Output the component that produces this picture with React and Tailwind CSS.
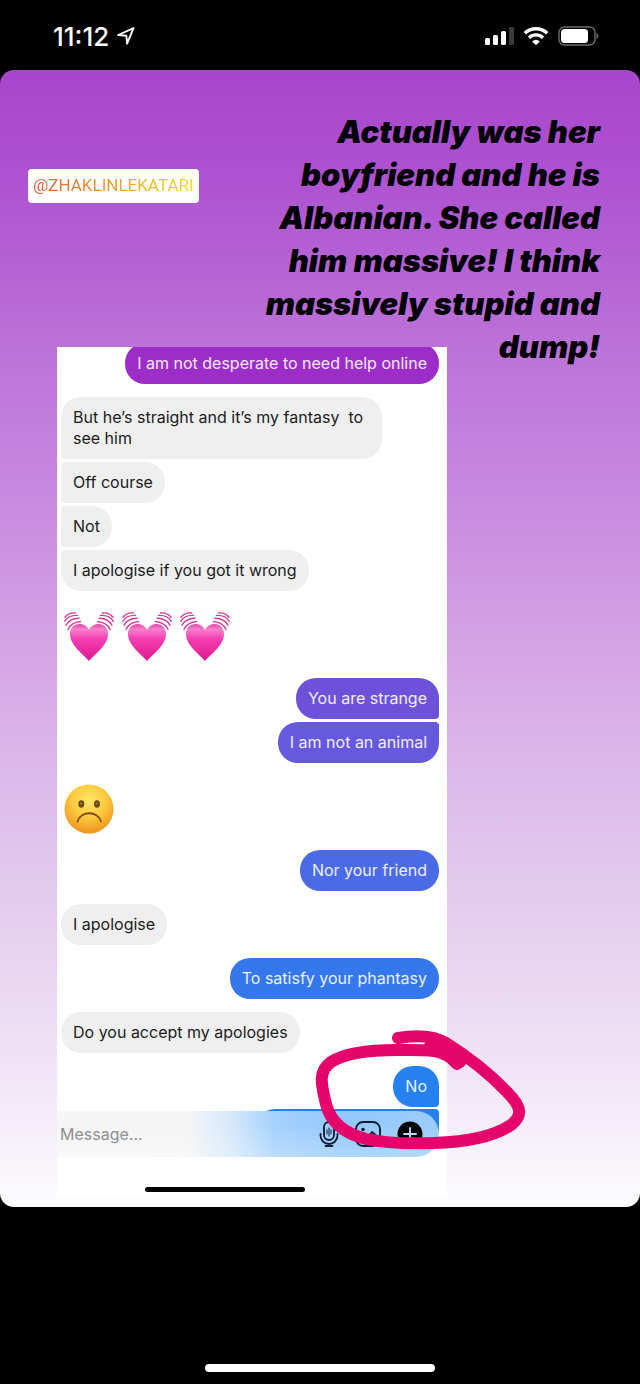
const thread = [
  {
    from: "me",
    items: [{ text: "I am not desperate to need help online", shape: "rounded-[20px]", color: "bg-[#9d2dc9]" }],
  },
  {
    from: "them",
    items: [
      { text: "But he’s straight and it’s my fantasy  to see him", shape: "rounded-[20px] rounded-bl-sm" },
      { text: "Off course", shape: "rounded-[20px] rounded-l-sm" },
      { text: "Not", shape: "rounded-[20px] rounded-l-sm" },
      { text: "I apologise if you got it wrong", shape: "rounded-[20px] rounded-tl-sm" },
    ],
  },
  { from: "them", emoji: "hearts" },
  {
    from: "me",
    items: [
      { text: "You are strange", shape: "rounded-[20px] rounded-br-sm", color: "bg-[#6e51d9]" },
      { text: "I am not an animal", shape: "rounded-[20px] rounded-tr-sm", color: "bg-[#6759de]" },
    ],
  },
  { from: "them", emoji: "sad" },
  {
    from: "me",
    items: [{ text: "Nor your friend", shape: "rounded-[20px]", color: "bg-[#4b6ae5]" }],
  },
  { from: "them", items: [{ text: "I apologise", shape: "rounded-[20px]" }] },
  {
    from: "me",
    items: [{ text: "To satisfy your phantasy", shape: "rounded-[20px]", color: "bg-[#3577ec]" }],
  },
  { from: "them", items: [{ text: "Do you accept my apologies", shape: "rounded-[20px]" }] },
  {
    from: "me",
    items: [{ text: "No", shape: "rounded-[20px] rounded-br-sm", color: "bg-[#2581f0]" }],
  },
];

const StatusBar = () => (
  <header className="flex h-[70px] items-center justify-between pt-0.5 pr-[41px] pl-[53px]">
    <div className="flex items-center gap-2">
      <span className="text-[26px] font-medium">11:12</span>
      <svg className="h-[18px] w-[18px]" viewBox="0 0 18 18" fill="none" stroke="currentColor" strokeWidth="1.9" strokeLinejoin="round">
        <path d="M16.5 1.2 1.2 8l8.200.8.700 7.800z" />
      </svg>
    </div>
    <div className="flex items-center gap-2">
      <svg className="h-5 w-[30px]" viewBox="0 0 30 20" fill="currentColor">
        <rect x="0" y="12" width="5" height="7" rx="1.5" />
        <rect x="8" y="9" width="5" height="10" rx="1.5" />
        <rect x="16" y="5" width="5" height="14" rx="1.5" />
        <rect x="24" y="1" width="5" height="18" rx="1.5" fill="#3a3a3a" />
      </svg>
      <svg className="h-5 w-[26px]" viewBox="0 0 26 20" fill="none" stroke="currentColor">
        <path d="M1.8 7.3a16.2 16.2 0 0 1 22.4 0" strokeWidth="3.6" />
        <path d="M6 11.7a10.1 10.1 0 0 1 14 0" strokeWidth="3.4" />
        <path d="M13 19.2 9.2 15.4a5.4 5.4 0 0 1 7.6 0z" fill="currentColor" stroke="none" />
      </svg>
      <svg className="h-5 w-[42px]" viewBox="0 0 42 20" fill="none">
        <rect x="2" y="1" width="36" height="18" rx="5.5" stroke="#6b6b6b" strokeWidth="1.4" />
        <rect x="4" y="3" width="27" height="14" rx="3.5" fill="#fff" />
        <path d="M39.500 7c2.400 1 2.400 5 0 6z" fill="#6b6b6b" />
      </svg>
    </div>
  </header>
);

const BeatingHeart = () => (
  <svg className="h-[50px] w-[50px]" viewBox="0 0 50 50" fill="none">
    <path
      d="M25 49C21 43.500 6 34 6 22C6 16 10 12 15.500 12C20 12 23.500 14.500 25 18C26.500 14.500 30 12 34.500 12C40 12 44 16 44 22C44 34 29 43.500 25 49Z"
      fill="url(#heartFill)"
    />
    <g stroke="#cf3a9c" strokeWidth="1.400" strokeLinecap="round">
      <path d="M4 17.500Q7 10.500 16.500 9.500M2 13.300Q5.500 6.500 15 6.200M.8 9.200Q4.500 3 13.500 3.400M1 5.200Q5 .2 11.500 1" />
      <path d="M46 17.500Q43 10.500 33.500 9.500M48 13.300Q44.500 6.500 35 6.200M49.200 9.200Q45.500 3 36.500 3.400M49 5.200Q45 .2 38.500 1" />
    </g>
  </svg>
);

const SadFace = () => (
  <svg className="h-[50px] w-[50px]" viewBox="0 0 50 50" role="img" aria-label="Frowning face">
    <circle cx="25" cy="25" r="24.500" fill="url(#faceFill)" />
    <ellipse cx="17.300" cy="20" rx="3" ry="3.700" fill="#6b4a16" />
    <ellipse cx="33" cy="20" rx="3" ry="3.700" fill="#6b4a16" />
    <circle cx="17" cy="19.500" r="1.100" fill="#a3803d" />
    <circle cx="32.700" cy="19.500" r="1.100" fill="#a3803d" />
    <path d="M13.500 37.500C17 26.500 33.500 26.500 37 37.500" fill="none" stroke="#7a4b12" strokeWidth="1.800" strokeLinecap="round" />
  </svg>
);

const Bubble = ({ item, mine }) => (
  <p
    className={`max-w-[321px] px-3 py-[10px] text-base leading-[21px] whitespace-pre-wrap ${item.shape} ${
      mine ? `self-end text-white/90 ${item.color}` : "self-start bg-[#efefef] text-[#1c1c1e]"
    }`}
  >
    {item.text}
  </p>
);

const Composer = () => (
  <form
    className="relative -mt-5 mr-2 flex h-[46px] items-center rounded-r-full bg-[linear-gradient(180deg,rgba(255,255,255,0)_30%,rgba(255,255,255,0.25)_100%),linear-gradient(90deg,#f6f6f6_0%,#f5f5f6_34%,#d5e8fb_46%,#a5d1fd_57%,#93c8fd_75%,#9bccfa_100%)] pr-4"
    onSubmit={(e) => e.preventDefault()}
  >
    <input
      type="text"
      aria-label="Message"
      placeholder="Message..."
      className="min-w-0 flex-1 bg-transparent pl-[3px] text-base text-black outline-none placeholder:text-[#8e8e93]"
    />
    <div className="flex items-center gap-4">
      <button type="button" aria-label="Voice message">
        <svg className="h-[26px] w-5" viewBox="0 0 20 26" fill="none" stroke="#0b1b30" strokeWidth="1.8" strokeLinecap="round">
          <rect x="5" y="1" width="10" height="18" rx="5" />
          <path d="M1.500 13v1.500a8.500 8.500 0 0 0 17 0V13M10 23v2M6.500 25h7" />
          <path d="M8 9v4M10 7v8M12 9v4" strokeWidth="1" />
        </svg>
      </button>
      <button type="button" aria-label="Send photo">
        <svg className="h-[26px] w-[26px]" viewBox="0 0 26 26" fill="none" stroke="#0b1b30" strokeWidth="1.900" strokeLinejoin="round">
          <rect x="1" y="1" width="24" height="24" rx="7" />
          <circle cx="8" cy="8.500" r="1.800" fill="#0b1b30" stroke="none" />
          <path d="m3 22 5-5 3 2 6-8 8 7" />
        </svg>
      </button>
      <button type="button" aria-label="More">
        <svg className="h-[26px] w-[26px]" viewBox="0 0 26 26">
          <circle cx="13" cy="13" r="12.500" fill="#000" />
          <path d="M13 7v12M7 13h12" stroke="#b5dafc" strokeWidth="1.900" strokeLinecap="round" />
        </svg>
      </button>
    </div>
  </form>
);

const Chat = () => (
  <section className="relative ml-[57px] w-[390px]">
    <div className="overflow-hidden bg-white">
      <div className="-mt-1 flex flex-col gap-[13px] pr-2 pl-1">
        {thread.map((group, i) => {
          if (group.emoji) {
            return (
              <div key={i} className="flex h-[61px] items-end gap-2 pb-[3px] pl-[3px]">
                {group.emoji === "hearts" ? (
                  <>
                    <BeatingHeart />
                    <BeatingHeart />
                    <BeatingHeart />
                  </>
                ) : (
                  <SadFace />
                )}
              </div>
            );
          }
          return (
            <div key={i} className="flex flex-col gap-[3px]">
              {group.items.map((item) => (
                <Bubble key={item.text} item={item} mine={group.from === "me"} />
              ))}
            </div>
          );
        })}
      </div>
      {/* Next message, mostly behind the composer */}
      <div className="mt-[2px] mr-2 ml-auto h-[22px] w-[184px] rounded-tl-[20px] rounded-tr-sm bg-[#2581f0]"></div>
      <Composer />
      <div className="mt-[30px] mb-[5px] ml-[88px] h-[5px] w-40 rounded-full bg-black"></div>
    </div>

    {/* Marker drawn over the conversation */}
    <svg
      className="pointer-events-none absolute top-[677px] left-[253px] h-[130px] w-[220px]"
      viewBox="310 1024 220 130"
      fill="none"
      stroke="#e5046c"
      strokeWidth="12"
      strokeLinecap="round"
      strokeLinejoin="round"
    >
      <path d="M398 1038C416 1035 432 1035 446 1043C470 1058 490 1074 507 1092C523 1108 522 1116 511 1125C493 1137 465 1142 434 1143C406 1144 385 1143 366 1139C342 1133 330 1120 326 1104C321 1084 318 1071 331 1062C345 1053 370 1050 397 1050C420 1050 436 1049 446 1055Q452 1058 457 1064" />
      <path d="M430 1046Q450 1050 460 1062" />
    </svg>
  </section>
);

const App = () => {
  return (
    <div className="flex min-h-screen flex-col bg-black font-['Inter',sans-serif] text-white">
      {/* Shared gradients for the emoji */}
      <svg className="absolute h-0 w-0" aria-hidden="true">
        <defs>
          <linearGradient id="heartFill" x1="0" y1="0" x2="0" y2="1">
            <stop offset="0" stopColor="#e04aa8" />
            <stop offset=".14" stopColor="#fa80cc" />
            <stop offset=".4" stopColor="#f43fb2" />
            <stop offset="1" stopColor="#e0188f" />
          </linearGradient>
          <radialGradient id="faceFill" cx=".5" cy=".32" r=".7">
            <stop offset="0" stopColor="#ffe766" />
            <stop offset=".5" stopColor="#fcc93f" />
            <stop offset="1" stopColor="#ee8f1c" />
          </radialGradient>
        </defs>
      </svg>

      <StatusBar />

      <main className="rounded-[14px] bg-[linear-gradient(180deg,#a846cb_0%,#ae53d1_10%,#bd73d9_25%,#c98ae0_38%,#dab2e8_58%,#e7d2f0_77%,#f3e8f8_90%,#fcfcfd_100%)] pb-[10px]">
        <div className="flex h-[277px] items-start justify-between pt-10 pr-10 pl-7">
          <a href="#zhaklinlekatari" className="mt-[59px] flex h-[34px] items-center rounded bg-white px-[5px]">
            <span className="bg-gradient-to-r from-[#e2573c] via-[#e8a02c] to-[#efdc1c] bg-clip-text font-['Roboto',sans-serif] text-[17px] text-transparent">
              @ZHAKLINLEKATARI
            </span>
          </a>
          <h1 className="text-right font-['Inter',sans-serif] text-[31px] leading-[43px] font-black text-black italic">
            Actually was her
            <br />
            boyfriend and he is
            <br />
            Albanian. She called
            <br />
            him massive! I think
            <br />
            massively stupid and
            <br />
            dump!
          </h1>
        </div>
        <Chat />
      </main>

      <footer className="mt-auto flex justify-center pb-3">
        <div className="h-2 w-[230px] rounded-full bg-white"></div>
      </footer>
    </div>
  );
};

export default App;
